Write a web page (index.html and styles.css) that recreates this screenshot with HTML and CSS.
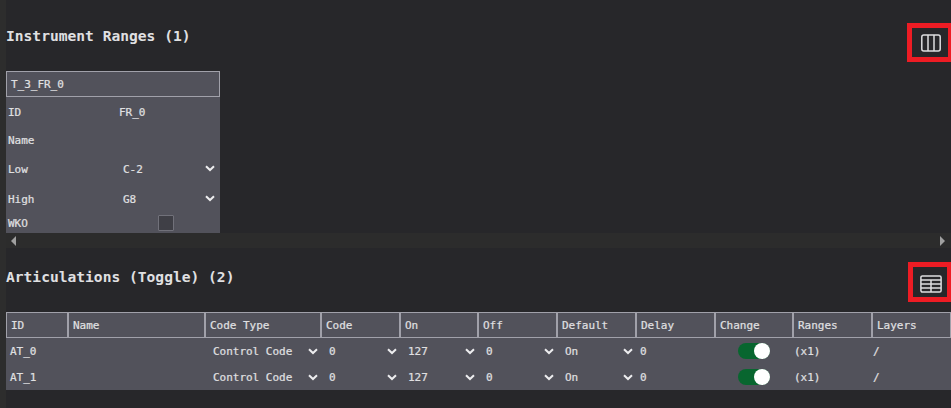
FILE: index.html
```
<!DOCTYPE html>
<html lang="en">
<head>
<meta charset="utf-8">
<title>Instrument Ranges</title>
<link rel="stylesheet" href="styles.css">
</head>
<body>
<svg width="0" height="0" class="defs"><symbol id="chev" viewBox="0 0 10 7"><path d="M1 1.2 5 5 9 1.2" fill="none" stroke="currentColor" stroke-width="2"/></symbol></svg>
<main>
  <section class="ranges">
    <header class="bar"><h2>Instrument Ranges (1)</h2></header>
    <div class="card">
      <div class="card-title">T_3_FR_0</div>
      <div class="field id"><span>ID</span><span class="val plain">FR_0</span></div>
      <div class="field name"><span>Name</span></div>
      <div class="field low"><span>Low</span><span class="val">C-2</span><svg class="chev"><use href="#chev"/></svg></div>
      <div class="field high"><span>High</span><span class="val">G8</span><svg class="chev"><use href="#chev"/></svg></div>
      <div class="field wko"><span>WKO</span><i class="check"></i></div>
    </div>
    <button class="mark mark-top" aria-label="Column view">
      <svg width="20" height="18" viewBox="0 0 20 18" fill="none" stroke="#dedee0" stroke-width="1.5"><rect x=".8" y=".9" width="18.4" height="16.2" rx="2"/><path d="M7 1v16M13 1v16"/></svg>
    </button>
  </section>
  <div class="scroll">
    <svg width="5" height="10"><path d="M5 0v10L0 5z"/></svg>
    <svg width="5" height="10"><path d="M0 0v10l5-5z"/></svg>
  </div>
  <section class="arts">
    <header class="bar"><h2>Articulations (Toggle) (2)</h2></header>
    <div class="grid head">
      <div>ID</div><div>Name</div><div>Code Type</div><div>Code</div><div>On</div><div>Off</div><div>Default</div><div>Delay</div><div>Change</div><div>Ranges</div><div>Layers</div>
    </div>
    <div class="grid row">
      <div>AT_0</div><div></div>
      <div class="sel">Control Code<svg class="chev"><use href="#chev"/></svg></div>
      <div class="sel">0<svg class="chev"><use href="#chev"/></svg></div>
      <div class="sel">127<svg class="chev"><use href="#chev"/></svg></div>
      <div class="sel">0<svg class="chev"><use href="#chev"/></svg></div>
      <div class="sel">On<svg class="chev"><use href="#chev"/></svg></div>
      <div>0</div><div class="tog"><i class="switch"></i></div><div class="tight">(x1)</div><div class="tight">/</div>
    </div>
    <div class="grid row">
      <div>AT_1</div><div></div>
      <div class="sel">Control Code<svg class="chev"><use href="#chev"/></svg></div>
      <div class="sel">0<svg class="chev"><use href="#chev"/></svg></div>
      <div class="sel">127<svg class="chev"><use href="#chev"/></svg></div>
      <div class="sel">0<svg class="chev"><use href="#chev"/></svg></div>
      <div class="sel">On<svg class="chev"><use href="#chev"/></svg></div>
      <div>0</div><div class="tog"><i class="switch"></i></div><div class="tight">(x1)</div><div class="tight">/</div>
    </div>
    <button class="mark mark-bottom" aria-label="Table view">
      <svg width="22" height="18" viewBox="0 0 22 18" fill="none" stroke="#dedee0" stroke-width="1.5"><rect x=".9" y=".9" width="20.2" height="16.2" rx="1.5"/><path d="M1 5h20M1 9h20M1 13h20M11 5v12"/></svg>
    </button>
  </section>
</main>
</body>
</html>
```
FILE: styles.css
```
* { box-sizing: border-box; }
body {
  margin: 0;
  height: 408px;
  overflow: hidden;
  background: #2d2d2d;
  color: #e0e0e2;
  font: 11px/16px "DejaVu Sans Mono", monospace;
  letter-spacing: -0.02px;
  -webkit-text-stroke: 0.2px currentColor;
}
.defs { position: absolute; }
main { margin-left: 6px; height: 408px; background: #27272a; }
section { position: relative; }
.ranges { height: 233px; padding-top: 23px; }
.bar { height: 48px; }
h2 { margin: 0; font-size: 14.6px; line-height: 25px; font-weight: 700; letter-spacing: 0; -webkit-text-stroke: 0; }

.card { width: 214px; height: 162px; background: #52525b; overflow: hidden; }
.card-title { height: 26px; padding: 5px 4px 0; border: 1px solid #a1a1aa; }
.field { display: grid; grid-template-columns: 115px 1fr 15px; align-items: center; padding-left: 2px; }
.plain { margin-left: -4px; }
.id { height: 31px; }
.name { height: 26px; }
.low { height: 31px; }
.high { height: 29px; }
.field .chev { margin-top: -2px; }
.wko { height: 19px; align-items: start; }
.wko span { margin-top: 2px; }
.check { width: 16px; height: 16px; margin: 1px 0 0 35px; border: 1px solid #71717a; border-radius: 1px; background: #3f3f46; }
.chev { width: 10px; height: 7px; color: #ededef; }

.scroll { height: 15px; padding: 0 6px 0 5px; display: flex; align-items: center; justify-content: space-between; background: #2c2c2c; fill: #a0a0a0; }

.arts { padding-top: 16px; }
.grid { display: grid; grid-template-columns: 62px 137px 116px 79px 78px 79px 79px 79px 78px 79px 79px; height: 26px; background: #52525b; }
.head > div { border: 1px solid #a1a1aa; padding: 5px 0 0 4px; }
.row > div { padding: 6px 0 0 4px; }
.row > .sel { display: flex; justify-content: space-between; padding: 6px 3px 0 8px; }
.sel .chev { margin-top: 4px; }
.row > .tog { padding: 5px 0 0 23px; }
.row > .tight { padding-left: 1px; }
.switch { display: flex; width: 32px; height: 16px; border-radius: 8px; background: #08662f; }
.switch::after { content: ""; width: 16px; height: 16px; margin-left: auto; border-radius: 50%; background: #fff; }

.mark { position: absolute; margin: 0; border: 5px solid #ed1c24; background: #27272a; display: flex; align-items: center; justify-content: flex-start; }
.mark-top { left: 901px; top: 23px; width: 44px; height: 39px; border-right-width: 3px; padding: 1px 0 0 9px; }
.mark-bottom { left: 902px; top: 14px; width: 43px; height: 40px; border-right-width: 4px; padding: 4px 0 0 7px; }
```
